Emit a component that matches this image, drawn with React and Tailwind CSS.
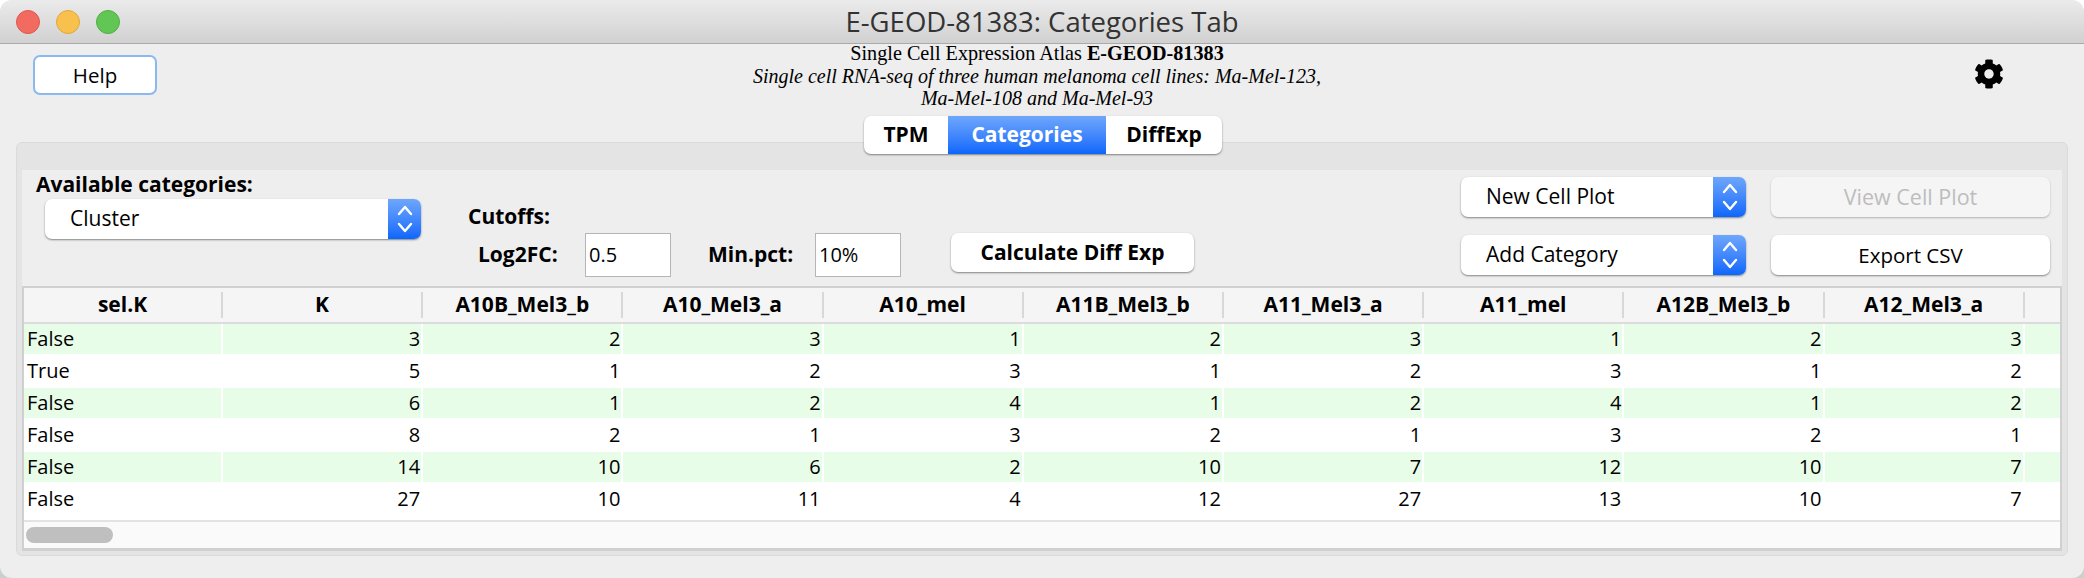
import { FaCog } from 'react-icons/fa';

const font = "font-['Open_Sans',sans-serif]";

const columns = ['sel.K', 'K', 'A10B_Mel3_b', 'A10_Mel3_a', 'A10_mel', 'A11B_Mel3_b', 'A11_Mel3_a', 'A11_mel', 'A12B_Mel3_b', 'A12_Mel3_a'];

const rows = [
  ['False', 3, 2, 3, 1, 2, 3, 1, 2, 3],
  ['True', 5, 1, 2, 3, 1, 2, 3, 1, 2],
  ['False', 6, 1, 2, 4, 1, 2, 4, 1, 2],
  ['False', 8, 2, 1, 3, 2, 1, 3, 2, 1],
  ['False', 14, 10, 6, 2, 10, 7, 12, 10, 7],
  ['False', 27, 10, 11, 4, 12, 27, 13, 10, 7],
];

function colWidth(i) {
  return i === 0 ? 'w-[199px]' : 'w-[200.2px]';
}

function Stepper() {
  return (
    <div className="w-[33px] h-full flex items-center justify-center bg-gradient-to-b from-[#6ea6fb] to-[#0a66fc] rounded-r-[7px]">
      <svg width="16" height="30" viewBox="0 0 16 30" fill="none" stroke="white" strokeWidth="2.4" strokeLinecap="round" strokeLinejoin="round">
        <polyline points="2,10 8,3 14,10" />
        <polyline points="2,20 8,27 14,20" />
      </svg>
    </div>
  );
}

function Select({ label, className }) {
  return (
    <div className={`flex items-center justify-between bg-white rounded-[7px] shadow-[0_1px_2px_rgba(0,0,0,0.45)] h-[40px] ${className}`}>
      <span className="pl-[25px] text-[21px] text-black">{label}</span>
      <Stepper />
    </div>
  );
}

function Button({ children, className = '' }) {
  return (
    <div className={`flex items-center justify-center bg-white rounded-[7px] shadow-[0_1px_2px_rgba(0,0,0,0.45)] text-black ${className}`}>
      {children}
    </div>
  );
}

function TextBox({ value }) {
  return (
    <div className="w-[86px] h-[44px] flex items-center pl-[3px] bg-white border border-[#b5b5b5] text-[20px] text-black">
      {value}
    </div>
  );
}

export default function App() {
  return (
    <div className={`w-[2084px] h-[578px] bg-[linear-gradient(to_bottom,#ffffff_50%,#c9d2c9_50%)] overflow-hidden ${font}`}>
      <div className="h-full flex flex-col bg-[#eeeeee] rounded-[12px] overflow-hidden">
        {/* title bar */}
        <div className="relative h-[44px] shrink-0 flex items-center justify-center bg-gradient-to-b from-[#ebebeb] to-[#d1d1d1] border-b border-[#aaaaaa]">
          <div className="absolute left-[16px] top-[10px] flex gap-[16px]">
            <div className="w-[24px] h-[24px] rounded-full bg-[#f26b60] border border-[#e0574c]" />
            <div className="w-[24px] h-[24px] rounded-full bg-[#f8c04c] border border-[#e1a73b]" />
            <div className="w-[24px] h-[24px] rounded-full bg-[#62c654] border border-[#52ae45]" />
          </div>
          <span className="text-[27.5px] text-[#333333]">E-GEOD-81383: Categories Tab</span>
        </div>

        {/* header */}
        <div className="h-[72px] shrink-0 flex items-start">
          <div className="w-[400px] shrink-0 pl-[33px] pt-[11px]">
            <Button className="w-[124px] h-[40px] border-2 border-[#8ab8f0] shadow-none text-[20.5px]">Help</Button>
          </div>
          <div className="w-[1274px] shrink-0 -mt-[2px] text-center font-['Liberation_Serif',serif] text-[20.2px] leading-[22.5px] text-black">
            <div>Single Cell Expression Atlas <b>E-GEOD-81383</b></div>
            <div className="italic text-[20px]">Single cell RNA-seq of three human melanoma cell lines: Ma-Mel-123,</div>
            <div className="italic text-[20px]">Ma-Mel-108 and Ma-Mel-93</div>
          </div>
          <div className="pl-[300px] pt-[15px]">
            <FaCog size={30} color="#000000" />
          </div>
        </div>

        {/* tabs */}
        <div className="relative z-10 h-[38px] -mb-[12px] shrink-0 flex justify-center pl-[2px]">
          <div className="flex h-[38px] rounded-[7px] overflow-hidden bg-white shadow-[0_1px_2px_rgba(0,0,0,0.45)] text-[21px] font-bold">
            <div className="w-[84px] flex items-center justify-center text-black">TPM</div>
            <div className="w-[158px] flex items-center justify-center text-white bg-gradient-to-b from-[#6ea6fb] to-[#0a66fc]">Categories</div>
            <div className="w-[116px] flex items-center justify-center text-black">DiffExp</div>
          </div>
        </div>

        {/* tabbed pane */}
        <div className="mx-[16px] h-[414px] shrink-0 pt-[27px] px-[5px] pb-[4px] bg-[#e4e4e4] border border-[#dadada] rounded-[6px]">
          <div className="h-full flex flex-col bg-[#eeeeee]">
            {/* controls */}
            <div className="h-[116px] shrink-0 flex">
              <div className="w-[446px] shrink-0 pl-[14px]">
                <div className="h-[29px] flex items-center text-[21px] font-bold text-black">Available categories:</div>
                <Select label="Cluster" className="ml-[9px] w-[376px]" />
              </div>
              <div className="w-[993px] shrink-0 pt-[30px]">
                <div className="h-[33px] flex items-center text-[21px] font-bold text-black">Cutoffs:</div>
                <div className="flex items-start">
                  <div className="ml-[10px] w-[107px] h-[44px] flex items-center text-[21px] font-bold text-black">Log2FC:</div>
                  <TextBox value="0.5" />
                  <div className="ml-[37px] w-[107px] h-[44px] flex items-center text-[21px] font-bold text-black">Min.pct:</div>
                  <TextBox value="10%" />
                  <Button className="ml-[50px] w-[243px] h-[39px] font-bold text-[21px]">Calculate Diff Exp</Button>
                </div>
              </div>
              <div className="pt-[7px] flex flex-col gap-[18px]">
                <div className="flex gap-[25px]">
                  <Select label="New Cell Plot" className="w-[285px]" />
                  <div className="w-[279px] h-[40px] flex items-center justify-center bg-[#f5f5f5] rounded-[7px] shadow-[0_1px_2px_rgba(0,0,0,0.25)] text-[21.5px] text-[#bdbdbd]">View Cell Plot</div>
                </div>
                <div className="flex gap-[25px]">
                  <Select label="Add Category" className="w-[285px]" />
                  <Button className="w-[279px] h-[40px] text-[20.5px]">Export CSV</Button>
                </div>
              </div>
            </div>

            {/* table */}
            <div className="flex-1 flex flex-col border-x-2 border-t-2 border-b-[3px] border-[#d0d0d0] text-[20px] text-black">
              <div className="h-[36px] shrink-0 flex bg-[#f5f5f5] border-b-2 border-[#dcdcdc]">
                {columns.map((c, i) => (
                  <div key={c} className={`${colWidth(i)} h-full flex items-center py-[4px]`}>
                    <div className="flex-1 h-[26px] flex items-center justify-center text-[21px] font-bold border-r-2 border-[#d8d8d8]">{c}</div>
                  </div>
                ))}
              </div>
              <div className="h-[196px] shrink-0 bg-white">
                {rows.map((row, r) => (
                  <div key={r} className="h-[32px] flex">
                    {row.map((v, i) => (
                      <div key={i} className={`${colWidth(i)} h-[30px] pr-[2px]`}>
                        <div className={`h-full flex items-center ${i === 0 ? 'pl-[3px]' : 'justify-end pr-[1px]'} ${r % 2 === 0 ? 'bg-[#e8fde8]' : 'bg-white'}`}>{v}</div>
                      </div>
                    ))}
                    <div className={`flex-1 h-[30px] ${r % 2 === 0 ? 'bg-[#e8fde8]' : 'bg-white'}`} />
                  </div>
                ))}
              </div>
              <div className="flex-1 flex items-center pl-[2px] bg-[#fafafa] border-t-2 border-[#e3e3e3]">
                <div className="w-[87px] h-[16px] rounded-full bg-[#bfbfbf]" />
              </div>
            </div>
          </div>
        </div>
      </div>
    </div>
  );
}
